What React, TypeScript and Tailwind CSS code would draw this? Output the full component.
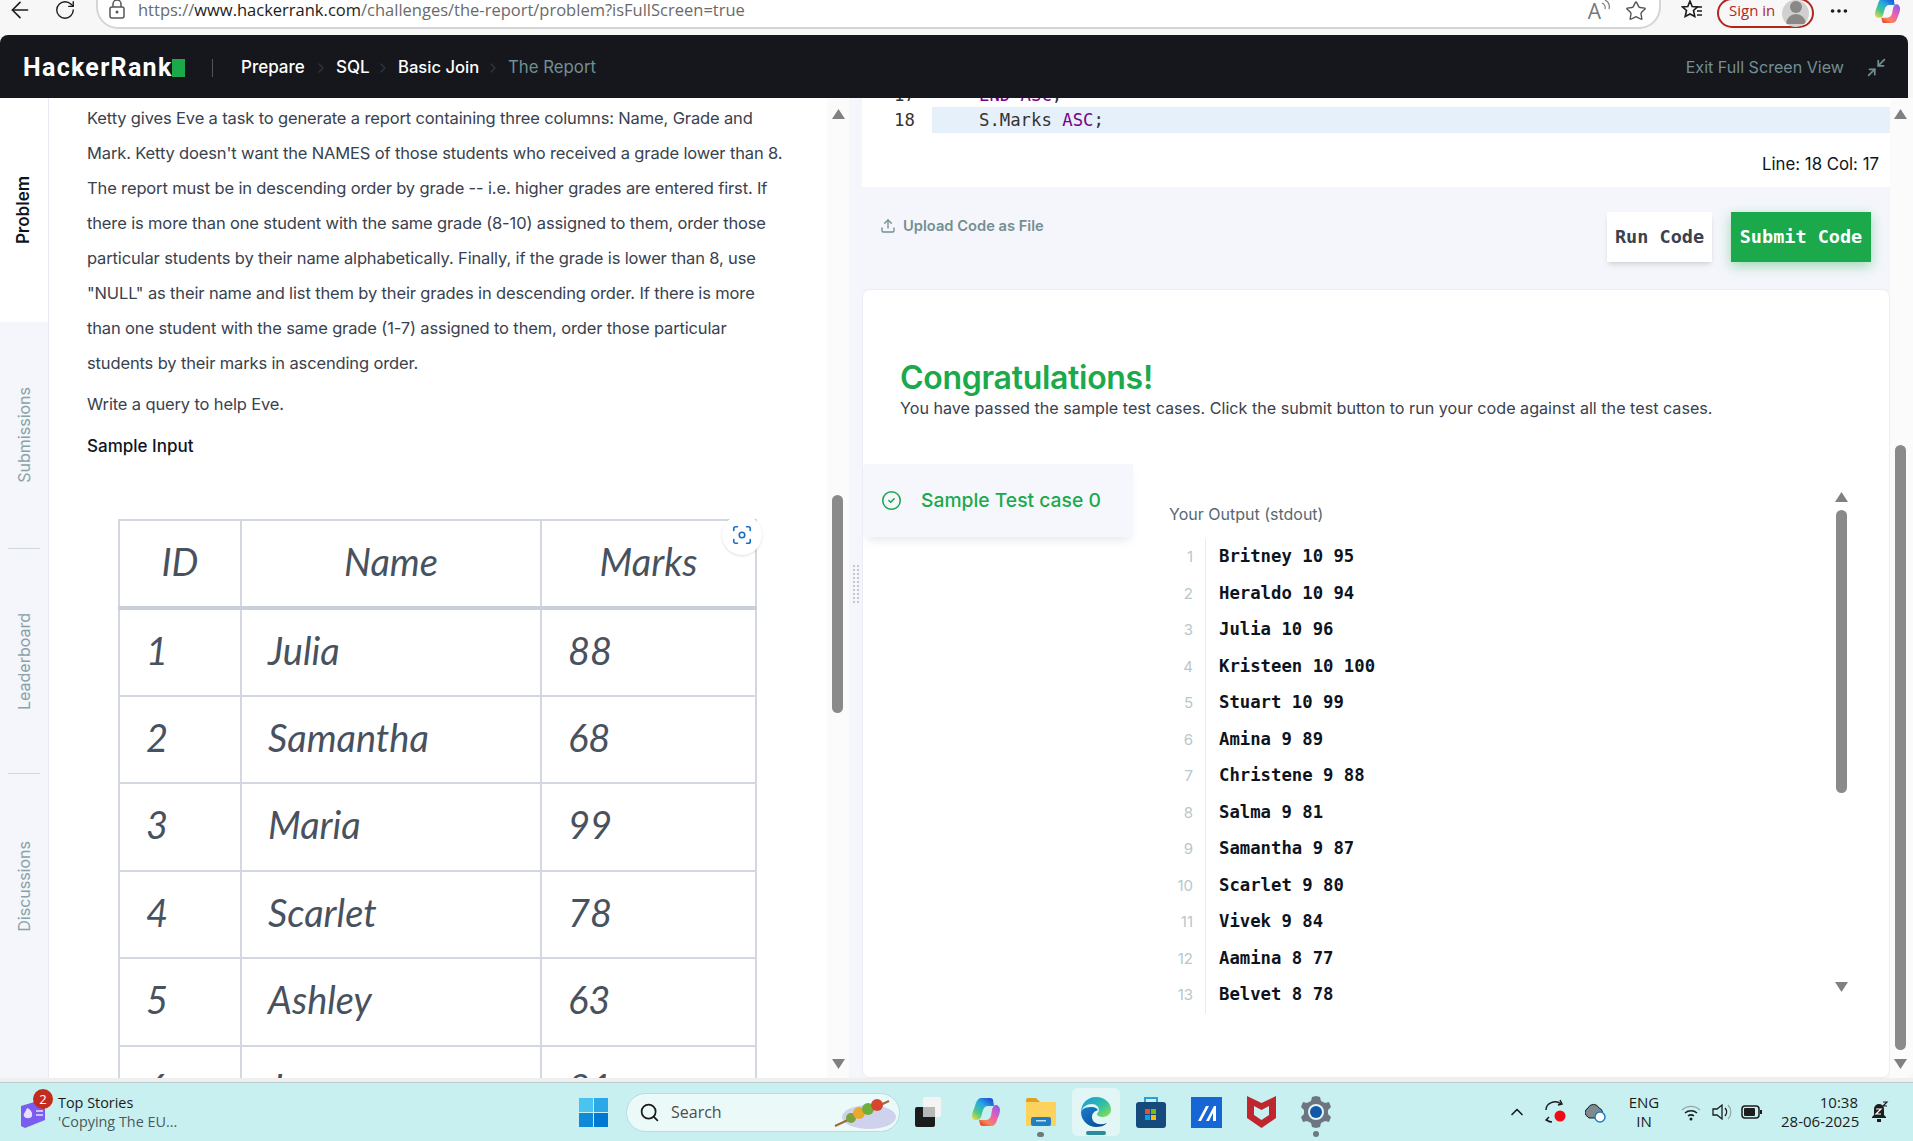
import { Fragment } from "react";
import { ChevronRight, Search, Star, RotateCw, ArrowLeft, Minimize2, CircleCheck, Ellipsis, Focus, Upload, ChevronUp } from "lucide-react";

const statement = [
  "Ketty gives Eve a task to generate a report containing three columns: Name, Grade and",
  "Mark. Ketty doesn't want the NAMES of those students who received a grade lower than 8.",
  "The report must be in descending order by grade -- i.e. higher grades are entered first. If",
  "there is more than one student with the same grade (8-10) assigned to them, order those",
  "particular students by their name alphabetically. Finally, if the grade is lower than 8, use",
  "\"NULL\" as their name and list them by their grades in descending order. If there is more",
  "than one student with the same grade (1-7) assigned to them, order those particular",
  "students by their marks in ascending order.",
];

const students = [
  ["1", "Julia", "88"],
  ["2", "Samantha", "68"],
  ["3", "Maria", "99"],
  ["4", "Scarlet", "78"],
  ["5", "Ashley", "63"],
  ["6", "Jane", "81"],
];

const output = [
  "Britney 10 95",
  "Heraldo 10 94",
  "Julia 10 96",
  "Kristeen 10 100",
  "Stuart 10 99",
  "Amina 9 89",
  "Christene 9 88",
  "Salma 9 81",
  "Samantha 9 87",
  "Scarlet 9 80",
  "Vivek 9 84",
  "Aamina 8 77",
  "Belvet 8 78",
];

const tabs = [
  { label: "Problem", h: "h-[224px] bg-white text-[#0e141e] font-semibold text-[17px]" },
  { label: "Submissions", h: "h-[226px]" },
  { label: "Leaderboard", h: "h-[224px]" },
  { label: "Discussions", h: "h-[225px]" },
];

function ArrowTri({ down, className }: { down?: boolean; className?: string }) {
  return (
    <svg width="13" height="10" viewBox="0 0 13 10" className={className}>
      <path d={down ? "M0 0H13L6.5 10Z" : "M0 10H13L6.5 0Z"} fill="#808080" />
    </svg>
  );
}

function Copilot({ size }: { size: number }) {
  return (
    <svg width={size} height={size} viewBox="0 0 30 30">
      <defs>
        <linearGradient id={`cpa${size}`} x1="0.8" y1="0" x2="0.1" y2="1">
          <stop offset="0" stopColor="#1d4fd8" />
          <stop offset="0.35" stopColor="#25a8e0" />
          <stop offset="0.7" stopColor="#48c98a" />
          <stop offset="1" stopColor="#f0d83c" />
        </linearGradient>
        <linearGradient id={`cpb${size}`} x1="0.9" y1="0" x2="0.2" y2="1">
          <stop offset="0" stopColor="#8a5cf0" />
          <stop offset="0.45" stopColor="#e860b0" />
          <stop offset="0.8" stopColor="#f8845a" />
          <stop offset="1" stopColor="#e84a2c" />
        </linearGradient>
      </defs>
      <path d="M10 1h9c2 0 3 1 3 2l1 6h-6c-3 0-4 2-5 4l-2 7c-.6 2-2 3-4 3H4c-2 0-3-2-3-4 0-3 2-7 3-10 1-4 3-8 6-8Z" fill={`url(#cpa${size})`} />
      <path d="M25 8c2 0 4 2 4 5 0 4-2 7-3 10-1 4-3 6-6 6h-8c-2 0-3-1-3-2l-1-4h7c3 0 4-2 5-4l1-6c.6-3 2-5 4-5Z" fill={`url(#cpb${size})`} />
    </svg>
  );
}

function Taskbar() {
  return (
    <div className="h-[59px] flex items-center bg-[#c9f0f0] border-t border-[#b9cfcf] relative">
      <div className="w-[579px] flex items-center pl-[19px] shrink-0">
        <div className="relative w-[39px] h-[36px]">
          <svg width="28" height="32" viewBox="0 0 28 32" className="absolute left-0 top-[4px]">
            <path d="M2 8l20-6 4 4v16l-20 8-4-2Z" fill="#7a5cf0" />
            <path d="M8 10c3 1 6 4 5 8-1 3-7 3-8 0-1-2 1-3 3-8Z" fill="#e8e0ff" />
            <path d="M17 13h7M17 17h7" stroke="#e8e0ff" strokeWidth="1.5" />
          </svg>
          <div className="absolute left-[14px] top-[-5px] w-[20px] h-[20px] rounded-full bg-[#c42b1c] text-white text-[13px] leading-[20px] text-center font-['Open_Sans',sans-serif]">2</div>
        </div>
        <div className="font-['Open_Sans',sans-serif] text-[14.4px] leading-[19px]">
          <div className="text-[#1b1b1b]">Top Stories</div>
          <div className="text-[#4a5a5a]">'Copying The EU...</div>
        </div>
      </div>
      <svg width="29" height="29" viewBox="0 0 29 29" className="shrink-0">
        <rect x="0" y="0" width="14" height="14" fill="#4cc2f1" />
        <rect x="15" y="0" width="14" height="14" fill="#2aa8e8" />
        <rect x="0" y="15" width="14" height="14" fill="#0f8ad8" />
        <rect x="15" y="15" width="14" height="14" fill="#0078d4" />
      </svg>
      <div className="ml-[18px] w-[274px] h-[39px] rounded-full bg-[#ecf9f9] border border-[#b5dede] flex items-center pl-[12px] relative shrink-0">
        <Search size={21} strokeWidth={2} className="text-[#1c1c1c]" />
        <span className="ml-[11px] text-[16px] text-[#4d4d4d] font-['Open_Sans',sans-serif]">Search</span>
        <svg width="64" height="36" viewBox="0 0 64 36" className="absolute right-[2px] top-[1px]">
          <ellipse cx="36" cy="22" rx="27" ry="12" fill="#cfd2ec" />
          <path d="M2 31L56 6" stroke="#9a6b38" strokeWidth="2" />
          <circle cx="18" cy="23" r="5" fill="#7ba33a" />
          <circle cx="26" cy="18" r="6" fill="#e9a92c" />
          <circle cx="35" cy="14" r="6" fill="#6fae3c" />
          <circle cx="44" cy="10" r="6" fill="#d8442c" />
        </svg>
      </div>
      <svg width="26" height="30" viewBox="0 0 26 30" className="ml-[15px] shrink-0">
        <rect x="8" y="0" width="18" height="20" rx="2" fill="#f4f4f4" />
        <rect x="0" y="10" width="20" height="20" rx="2" fill="#1c1c1c" />
        <rect x="8" y="10" width="12" height="10" fill="#b8b8b8" />
      </svg>
      <div className="ml-[30px] shrink-0"><Copilot size={30} /></div>
      <div className="ml-[24px] relative shrink-0">
        <svg width="32" height="30" viewBox="0 0 32 30">
          <path d="M1 3a2 2 0 0 1 2-2h8l4 4H1Z" fill="#e0a020" />
          <rect x="1" y="5" width="30" height="24" rx="1" fill="#fcd25c" />
          <rect x="6" y="20" width="20" height="9" rx="2" fill="#1f7fc4" />
          <rect x="11" y="23" width="10" height="1.5" fill="#bfe0f5" />
        </svg>
        <div className="absolute left-[12px] top-[35px] w-[7px] h-[5px] rounded-full bg-[#6e7a7a]" />
      </div>
      <div className="ml-[15px] w-[48px] h-[48px] rounded-md bg-[#e2f6f6] flex items-center justify-center relative shrink-0">
        <svg width="30" height="30" viewBox="0 0 30 30">
          <defs>
            <linearGradient id="edge" x1="0.2" y1="0" x2="1" y2="0.8">
              <stop offset="0" stopColor="#1a9fd8" />
              <stop offset="0.6" stopColor="#35c1a0" />
              <stop offset="1" stopColor="#7fdc5a" />
            </linearGradient>
            <linearGradient id="edgeb" x1="0" y1="0" x2="0.8" y2="1">
              <stop offset="0" stopColor="#1b7fd0" />
              <stop offset="1" stopColor="#0a4a94" />
            </linearGradient>
          </defs>
          <path d="M15 0C6 0 0 7 0 15c1-5 6-8 11-8 4 0 7 3 7 6 0 2-2 3-2 4 0 2 3 3 6 3 4 0 8-3 8-7C30 6 24 0 15 0Z" fill="url(#edge)" />
          <path d="M0 15c0 9 8 15 15 15 4 0 8-1 11-4-8 3-15 0-15-6 0-4 3-6 6-7-1-2-4-3-6-3-5 0-10 1-11 5Z" fill="url(#edgeb)" />
        </svg>
        <div className="absolute bottom-[1px] left-[14px] w-[20px] h-[4px] rounded-full bg-[#2b8b9a]" />
      </div>
      <svg width="30" height="32" viewBox="0 0 30 32" className="ml-[16px] shrink-0">
        <path d="M9 6V2h12v4" stroke="#2aa0d8" strokeWidth="2" fill="none" />
        <rect x="0" y="6" width="30" height="26" rx="3" fill="#174a7c" />
        <rect x="9" y="13" width="5" height="5" fill="#e8502a" />
        <rect x="15" y="13" width="5" height="5" fill="#7fba00" />
        <rect x="9" y="19" width="5" height="5" fill="#00a4ef" />
        <rect x="15" y="19" width="5" height="5" fill="#ffb900" />
      </svg>
      <svg width="31" height="31" viewBox="0 0 31 31" className="ml-[25px] shrink-0">
        <rect width="31" height="31" fill="#1766d6" />
        <path d="M7 24L15 9h3L10 24ZM15 24L23 9h2v15h-3v-8l-4 8Z" fill="#fff" />
      </svg>
      <svg width="29" height="32" viewBox="0 0 29 32" className="ml-[25px] shrink-0">
        <path d="M0 0l14.5 7L29 0v22l-14.5 10L0 22Z" fill="#c0262d" />
        <path d="M7 10l7.5 4L22 10v9l-7.5 5L7 19Z" fill="#c9f0f0" />
      </svg>
      <div className="ml-[25px] relative shrink-0">
        <svg width="30" height="32" viewBox="0 0 30 32">
          <path d="M15 0l4 1 1 4 4 2 4-1 2 5-3 3v4l3 3-2 5-4-1-4 2-1 4-4 1-4-1-1-4-4-2-4 1-2-5 3-3v-4l-3-3 2-5 4 1 4-2 1-4Z" fill="#6d7680" />
          <circle cx="15" cy="16" r="8" fill="#e4f4f4" />
          <circle cx="15" cy="16" r="6" fill="#1058a8" />
        </svg>
        <div className="absolute left-[12px] top-[35px] w-[6px] h-[6px] rounded-full bg-[#6e7a7a]" />
      </div>
      <div className="ml-[179px] shrink-0 w-[14px]"><ChevronUp size={20} className="text-[#1c1c1c] -ml-[3px]" /></div>
      <svg width="22" height="26" viewBox="0 0 22 26" className="ml-[21px] shrink-0">
        <path d="M1 11a9 8 0 0 1 15-6M1 20a8 8 0 0 0 6 3M15 1l2 4-4 1M4 18l-3 3 4 2" stroke="#1c1c1c" strokeWidth="1.5" fill="none" />
        <circle cx="15" cy="17" r="5.5" fill="#f00a14" />
      </svg>
      <svg width="21" height="22" viewBox="0 0 21 22" className="ml-[18px] shrink-0">
        <path d="M3 16a5 5 0 0 1 0-9 6 6 0 0 1 11 0 5 5 0 0 1 3 7l-2 3H4Z" fill="#7f8a8f" stroke="#1c1c1c" strokeWidth="1" />
        <circle cx="15" cy="16" r="5" fill="#fff" stroke="#1f7fc4" strokeWidth="1.5" />
      </svg>
      <div className="ml-[20px] w-[36px] shrink-0 text-center text-[15px] leading-[19px] text-[#1c1c1c] font-['Open_Sans',sans-serif]">
        <div>ENG</div>
        <div>IN</div>
      </div>
      <svg width="20" height="18" viewBox="0 0 20 18" className="ml-[19px] shrink-0">
        <path d="M1 7a13 13 0 0 1 18 0" stroke="#8fa6a6" strokeWidth="1.2" fill="none" />
        <path d="M4 10a9 9 0 0 1 12 0M7 13a5 5 0 0 1 6 0" stroke="#1c1c1c" strokeWidth="1.5" fill="none" />
        <circle cx="10" cy="16" r="1.5" fill="#1c1c1c" />
      </svg>
      <svg width="21" height="18" viewBox="0 0 21 18" className="ml-[11px] shrink-0">
        <path d="M1 6h4l5-4v14l-5-4H1Z" stroke="#1c1c1c" strokeWidth="1.3" fill="none" />
        <path d="M13 5a6 6 0 0 1 0 8" stroke="#1c1c1c" strokeWidth="1.4" fill="none" />
        <path d="M16 2a10 10 0 0 1 0 14" stroke="#8fa6a6" strokeWidth="1.2" fill="none" />
      </svg>
      <svg width="21" height="14" viewBox="0 0 21 14" className="ml-[8px] shrink-0">
        <rect x="1" y="1" width="17" height="12" rx="3" fill="none" stroke="#1c1c1c" strokeWidth="1.5" />
        <rect x="3" y="3" width="11" height="8" rx="1" fill="#1c1c1c" />
        <rect x="19" y="5" width="2" height="4" fill="#1c1c1c" />
      </svg>
      <div className="ml-[19px] w-[77px] shrink-0 text-right text-[15px] leading-[19px] text-[#1c1c1c] font-['Open_Sans',sans-serif]">
        <div>10:38</div>
        <div className="whitespace-nowrap">28-06-2025</div>
      </div>
      <div className="ml-[14px] relative w-[17px] h-[24px] shrink-0">
        <svg width="17" height="24" viewBox="0 0 17 24" className="absolute left-0 top-0">
          <path d="M7 4a5 5 0 0 1 5 5v6l2 2v1H0v-1l2-2V9a5 5 0 0 1 5-5Z" fill="#1c1c1c" />
          <rect x="5" y="19" width="4" height="3" fill="#1c1c1c" />
          <path d="M4 9h5l-5 5h5" stroke="#fff" strokeWidth="1.2" fill="none" />
          <path d="M11 2h4l-4 4h4" stroke="#1c1c1c" strokeWidth="1.2" fill="none" />
        </svg>
      </div>
    </div>
  );
}

export default function App() {
  return (
    <div className="h-[1141px] w-[1913px] overflow-hidden flex flex-col bg-[#f7f7f7] font-['Inter',sans-serif]">
      {/* browser toolbar */}
      <div className="h-[35px] flex items-start shrink-0 relative">
        <ArrowLeft size={26} strokeWidth={1.5} className="ml-[7px] -mt-[3px] text-[#1c1c1c]" />
        <RotateCw size={22} strokeWidth={1.5} className="ml-[21px] -mt-[1px] text-[#1c1c1c]" />
        <div className="ml-[20px] w-[1565px] h-[30px] -mt-[1px] bg-white border-b-2 border-r-2 border-l-2 border-[#d5d5d5] rounded-b-[22px] flex items-start pl-[10px] pr-[12px]">
          <div className="w-[20px] h-[20px] relative">
            <svg width="18" height="20" viewBox="0 0 18 20">
              <path d="M5 8V5a4 4 0 0 1 8 0v3" fill="none" stroke="#555" strokeWidth="1.5" />
              <rect x="2" y="8" width="14" height="11" rx="2" fill="none" stroke="#555" strokeWidth="1.5" />
              <circle cx="9" cy="13" r="1.5" fill="#555" />
            </svg>
          </div>
          <span className="ml-[10px] mt-[1px] text-[16.5px] leading-[20px] whitespace-nowrap text-[#6a6a6a] font-['Open_Sans',sans-serif]">
            https://<span className="text-[#1c1c1c]">www.hackerrank.com</span>/challenges/the-report/problem?isFullScreen=true
          </span>
          <div className="ml-auto flex items-center">
            <span className="text-[21px] leading-[24px] text-[#777] font-['Open_Sans',sans-serif]">A</span>
            <svg width="9" height="12" viewBox="0 0 9 12" className="-mt-[10px]">
              <path d="M1 3a5 5 0 0 1 3 6M4 0a8 8 0 0 1 4 9" stroke="#777" strokeWidth="1.2" fill="none" />
            </svg>
            <Star size={22} strokeWidth={1.5} className="ml-[15px] text-[#555]" />
          </div>
        </div>
        <svg width="22" height="22" viewBox="0 0 22 22" className="ml-[20px] mt-[-1px]">
          <path d="M9 2l2.2 5.5 5.3.4-4 3.6 1.3 6L9 15l-4.8 2.5 1.3-6-4-3.600 5.300-.4Z" fill="none" stroke="#1c1c1c" strokeWidth="1.6" />
          <path d="M15 8h6M16 12h5M16 16h5" stroke="#1c1c1c" strokeWidth="1.3" />
        </svg>
        <div className="ml-[14px] w-[97px] h-[30px] -mt-[2px] border-2 border-[#b3261e] rounded-full flex items-center pl-[10px] shrink-0">
          <span className="text-[15px] leading-[16px] -mt-[6px] text-[#b3261e] font-['Open_Sans',sans-serif]">Sign in</span>
          <div className="ml-[7px] w-[27px] h-[27px] rounded-full bg-[#d2d0ce] flex flex-col items-center overflow-hidden">
            <div className="w-[12px] h-[12px] rounded-full bg-[#8a8886] mt-[1px]" />
            <div className="w-[20px] h-[10px] rounded-t-full bg-[#8a8886] mt-[1px]" />
          </div>
        </div>
        <Ellipsis size={22} className="ml-[14px] text-[#1c1c1c]" />
        <div className="ml-[24px] -mt-[3px]"><Copilot size={27} /></div>
      </div>

      {/* hackerrank nav */}
      <div className="h-[63px] shrink-0 w-[1908px] pt-[2px] bg-[#15171c] rounded-t-[8px] flex items-center pl-[23px] pr-[21px] text-[17px]">
        <span className="text-white font-bold text-[25px] tracking-[1.3px] w-[149px] whitespace-nowrap font-['Roboto',sans-serif]">HackerRank</span>
        <div className="w-[13px] h-[18px] bg-[#1ba94c]" />
        <div className="w-px h-[18px] bg-[#4d5560] ml-[27px]" />
        <span className="ml-[28px] w-[65px] text-white font-medium">Prepare</span>
        <ChevronRight size={16} className="mx-[7px] text-[#2f353d]" />
        <span className="w-[32px] text-white font-medium">SQL</span>
        <ChevronRight size={16} className="mx-[7px] text-[#2f353d]" />
        <span className="w-[80px] text-[16.6px] text-white font-medium whitespace-nowrap">Basic Join</span>
        <ChevronRight size={16} className="mx-[7px] text-[#2f353d]" />
        <span className="text-[#738f93] text-[16.8px]">The Report</span>
        <span className="ml-auto text-[#738f93] text-[16.1px]">Exit Full Screen View</span>
        <Minimize2 size={21} className="ml-[22px] text-[#738f93]" />
      </div>

      <div className="h-[980px] shrink-0 flex bg-[#f4f6fb] rounded-b-[8px] overflow-hidden">
        {/* tabs */}
        <div className="w-[49px] shrink-0 border-r border-[#e7eaf3] text-[16px] text-[#8aa2a6]">
          {tabs.map((tab, i) => (
            <Fragment key={tab.label}>
              <div className={`${tab.h} flex items-center justify-center`}>
                <span className="[writing-mode:vertical-rl] rotate-180">{tab.label}</span>
              </div>
              {i > 0 && i < 3 && <div className="h-px w-[32px] ml-[8px] bg-[#cfd9dc]" />}
            </Fragment>
          ))}
        </div>

        {/* problem statement */}
        <div className="w-[778px] shrink-0 bg-white overflow-hidden pl-[38px] pt-[3px] text-[#39424e]">
          <div className="text-[16.5px] leading-[35px] tracking-[-0.14px] whitespace-nowrap">
            {statement.map((line) => (
              <div key={line}>{line}</div>
            ))}
          </div>
          <div className="mt-[6px] text-[16.5px] leading-[35px] tracking-[-0.14px]">Write a query to help Eve.</div>
          <div className="mt-[7px] text-[17px] leading-[35px] font-medium text-[#0e141e]">Sample Input</div>
          <div className="relative mt-[55px] ml-[31px] w-[639px]">
            <table className="w-[639px] border-collapse table-fixed italic text-[38px] text-[#48525f] font-['Lato',sans-serif]">
              <thead>
                <tr className="h-[88px] border-b-4 border-[#c9cfdb]">
                  <th className="w-[122px] border-2 border-[#d3d7e0] font-normal pb-[4px]">ID</th>
                  <th className="w-[300px] border-2 border-[#d3d7e0] font-normal pb-[4px]">Name</th>
                  <th className="border-2 border-[#d3d7e0] font-normal pb-[4px]">Marks</th>
                </tr>
              </thead>
              <tbody>
                {students.map((row) => (
                  <tr key={row[0]} className="h-[87.5px]">
                    {row.map((cell, i) => (
                      <td key={i} className="border-2 border-[#d3d7e0] pl-[26px] pb-[4px]">{cell}</td>
                    ))}
                  </tr>
                ))}
              </tbody>
            </table>
            <div className="absolute right-[-5px] top-[-4px] w-[40px] h-[40px] rounded-full bg-white shadow-sm flex items-center justify-center">
              <Focus size={22} strokeWidth={1.8} className="text-[#1c6ec2]" />
            </div>
          </div>
        </div>

        {/* left scrollbar + splitter */}
        <div className="w-[22px] shrink-0 bg-[#fbfbfb] flex flex-col items-center justify-between pt-[11px] pb-[9px] relative">
          <ArrowTri />
          <div className="absolute left-[5px] top-[397px] w-[11px] h-[218px] rounded-full bg-[#8a8a8a]" />
          <ArrowTri down />
        </div>
        <div className="w-[13px] shrink-0 flex items-center justify-center">
          <div className="w-[8px] h-[40px] bg-[radial-gradient(#c4c8d0_1px,transparent_1.2px)] bg-[length:4px_4px] -mt-[8px]" />
        </div>

        {/* right column */}
        <div className="w-[1028px] shrink-0 flex flex-col">
          <div className="h-[89px] bg-white overflow-hidden shrink-0 pl-[32px] font-['DejaVu_Sans_Mono',monospace] text-[17.3px] text-[#333]">
            <div className="-mt-[16px] h-[26px] leading-[26px] flex">
              <span className="w-[38px]">17</span>
              <span className="ml-[47px] text-[#770088]">END ASC<span className="text-[#333]">;</span></span>
            </div>
            <div className="-mt-[1px] h-[26px] leading-[26px] flex">
              <span className="w-[38px]">18</span>
              <div className="flex-1 bg-[#e6f0fb] pl-[47px]">S.Marks <span className="text-[#770088]">ASC</span>;</div>
            </div>
            <div className="text-right pr-[11px] mt-[21px] font-['Inter',sans-serif] text-[16.8px] leading-[20px] text-[#0e141e]">Line: 18 Col: 17</div>
          </div>

          <div className="h-[102px] shrink-0 flex items-start pl-[18px] pr-[19px]">
            <Upload size={16} className="text-[#738f93] mt-[31px]" />
            <span className="ml-[7px] mt-[29px] text-[14.7px] leading-[20px] font-semibold text-[#738f93]">Upload Code as File</span>
            <button className="ml-auto mt-[25px] w-[105px] h-[50px] bg-white shadow-md font-['DejaVu_Sans_Mono',monospace] font-bold text-[18.5px] text-[#39424e] whitespace-nowrap">Run Code</button>
            <button className="ml-[19px] mt-[25px] w-[140px] h-[50px] bg-[#1ba94c] shadow-[0_4px_12px_rgba(27,169,76,0.4)] font-['DejaVu_Sans_Mono',monospace] font-bold text-[18.5px] text-white whitespace-nowrap">Submit Code</button>
          </div>

          <div className="flex-1 min-h-0 bg-white border border-[#ebeef5] rounded-[8px] relative overflow-hidden">
            <div className="pl-[37px] pt-[68px]">
              <div className="text-[32px] leading-[40px] font-semibold tracking-[-0.3px] text-[#1ba94c]">Congratulations!</div>
              <div className="text-[16.15px] leading-[20px] text-[#39424e] whitespace-nowrap">You have passed the sample test cases. Click the submit button to run your code against all the test cases.</div>
            </div>
            <div className="flex mt-[46px]">
              <div className="w-[270px] h-[73px] bg-[#f6f7fc] shadow-[0_6px_10px_-4px_rgba(57,66,78,0.15)] flex items-center pl-[18px] rounded-tl-[4px] shrink-0">
                <CircleCheck size={21} strokeWidth={1.8} className="text-[#1ba94c]" />
                <span className="ml-[19px] text-[19.3px] font-medium text-[#1ba94c] whitespace-nowrap">Sample Test case 0</span>
              </div>
              <div className="ml-[36px] mt-[38px] flex-1 min-w-0">
                <div className="text-[16px] leading-[24px] text-[#576871]">Your Output (stdout)</div>
                <div className="mt-[13px] font-['DejaVu_Sans_Mono',monospace] text-[17.3px]">
                  {output.map((row, i) => (
                    <div key={row} className="flex h-[36.5px] items-center">
                      <span className="w-[37px] shrink-0 pr-[12px] text-right text-[#b7c7cb] font-['Inter',sans-serif] text-[15px] border-r border-[#e7eaf3] h-full flex items-center justify-end">{i + 1}</span>
                      <span className="ml-[13px] font-bold text-[#0e141e]">{row}</span>
                    </div>
                  ))}
                </div>
              </div>
              <div className="w-[11px] shrink-0 mr-[42px] relative h-[500px] mt-[28px] flex flex-col items-center justify-between">
                <ArrowTri />
                <div className="absolute top-[18px] w-[11px] h-[283px] rounded-full bg-[#8a8a8a]" />
                <ArrowTri down />
              </div>
            </div>
          </div>
        </div>

        {/* page scrollbar */}
        <div className="flex-1 min-w-0 bg-[#fbfbfb] flex flex-col items-center justify-between pt-[11px] pb-[9px] pr-[2px] relative">
          <ArrowTri />
          <div className="absolute left-[5px] top-[347px] w-[11px] h-[605px] rounded-full bg-[#8a8a8a]" />
          <ArrowTri down />
        </div>
      </div>
      <div className="h-[4px] shrink-0 bg-[#efefef]" />
      <Taskbar />
    </div>
  );
}
